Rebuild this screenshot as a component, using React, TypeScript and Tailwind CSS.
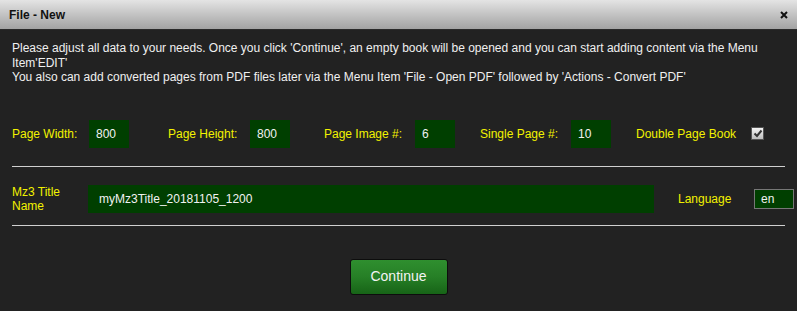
import React from "react";

function NumBox({ value }: { value: string }) {
  return (
    <div className="flex h-[28px] w-[40px] shrink-0 items-center bg-[#003f00] pl-[7px] text-[12px] text-[#f2f2f2]">
      {value}
    </div>
  );
}

function Label({ text, className }: { text: string; className: string }) {
  return <div className={`shrink-0 text-[12px] text-[#f2f200] ${className}`}>{text}</div>;
}

export default function App() {
  return (
    <div className="h-[311px] w-[797px] overflow-hidden bg-[#222222] font-['Liberation_Sans',Arial,sans-serif]">
      <div className="flex h-[30px] items-center justify-between border-b border-[#2a2a2a] bg-gradient-to-b from-[#e4e4e4] to-[#a3a3a3] pl-[9px] pr-[9px]">
        <span className="text-[12px] font-bold text-[#111]">File - New</span>
        <svg width="8" height="8" viewBox="0 0 8 8" className="mt-[1px]">
          <path d="M1 1L7 7M7 1L1 7" stroke="#111" strokeWidth="2" />
        </svg>
      </div>

      <div className="px-[12px] pt-[11px]">
        <p className="text-[12px] leading-[14.5px] text-[#f0f0f0]">
          Please adjust all data to your needs. Once you click 'Continue', an empty book will be opened and you can start adding content via the Menu Item'EDIT'
          <br />
          You also can add converted pages from PDF files later via the Menu Item 'File - Open PDF' followed by 'Actions - Convert PDF'
        </p>

        <div className="mt-[35px] flex items-center">
          <Label text="Page Width:" className="w-[77px]" />
          <NumBox value="800" />
          <Label text="Page Height:" className="ml-[39px] w-[82px]" />
          <NumBox value="800" />
          <Label text="Page Image #:" className="ml-[34px] w-[91px]" />
          <NumBox value="6" />
          <Label text="Single Page #:" className="ml-[25px] w-[91px]" />
          <NumBox value="10" />
          <Label text="Double Page Book" className="ml-[25px] w-[115px]" />
          <div className="flex h-[13px] w-[13px] shrink-0 items-center justify-center border border-[#555] bg-gradient-to-b from-[#f4f4f4] to-[#bdbdbd]">
            <svg width="10" height="9" viewBox="0 0 10 9">
              <path d="M1.5 4.5L4 7L8.5 1.5" fill="none" stroke="#333" strokeWidth="2" />
            </svg>
          </div>
        </div>

        <div className="mt-[18px] h-px bg-[#d0d0d0]" />

        <div className="mt-[18px] flex items-center">
          <div className="w-[76px] shrink-0">
            <div className="w-[50px] text-[12px] leading-[14px] text-[#f2f200]">Mz3 Title Name</div>
          </div>
          <div className="flex h-[28px] w-[566px] shrink-0 items-center bg-[#003f00] pl-[11px] text-[12px] text-[#f2f2f2]">
            myMz3Title_20181105_1200
          </div>
          <Label text="Language" className="ml-[24px] w-[76px]" />
          <div className="flex h-[20px] w-[40px] shrink-0 items-center border border-[#777] bg-[#003f00] pl-[6px] text-[12px] text-[#f2f2f2]">
            en
          </div>
        </div>

        <div className="mt-[12px] h-px bg-[#d0d0d0]" />

        <div className="mt-[33px] flex justify-center">
          <button className="h-[36px] w-[98px] rounded-[3px] border border-[#0d0d0d] bg-gradient-to-b from-[#2f8f2f] via-[#267f26] to-[#176417] text-[14px] text-[#f4f4f4]">
            Continue
          </button>
        </div>
      </div>
    </div>
  );
}
